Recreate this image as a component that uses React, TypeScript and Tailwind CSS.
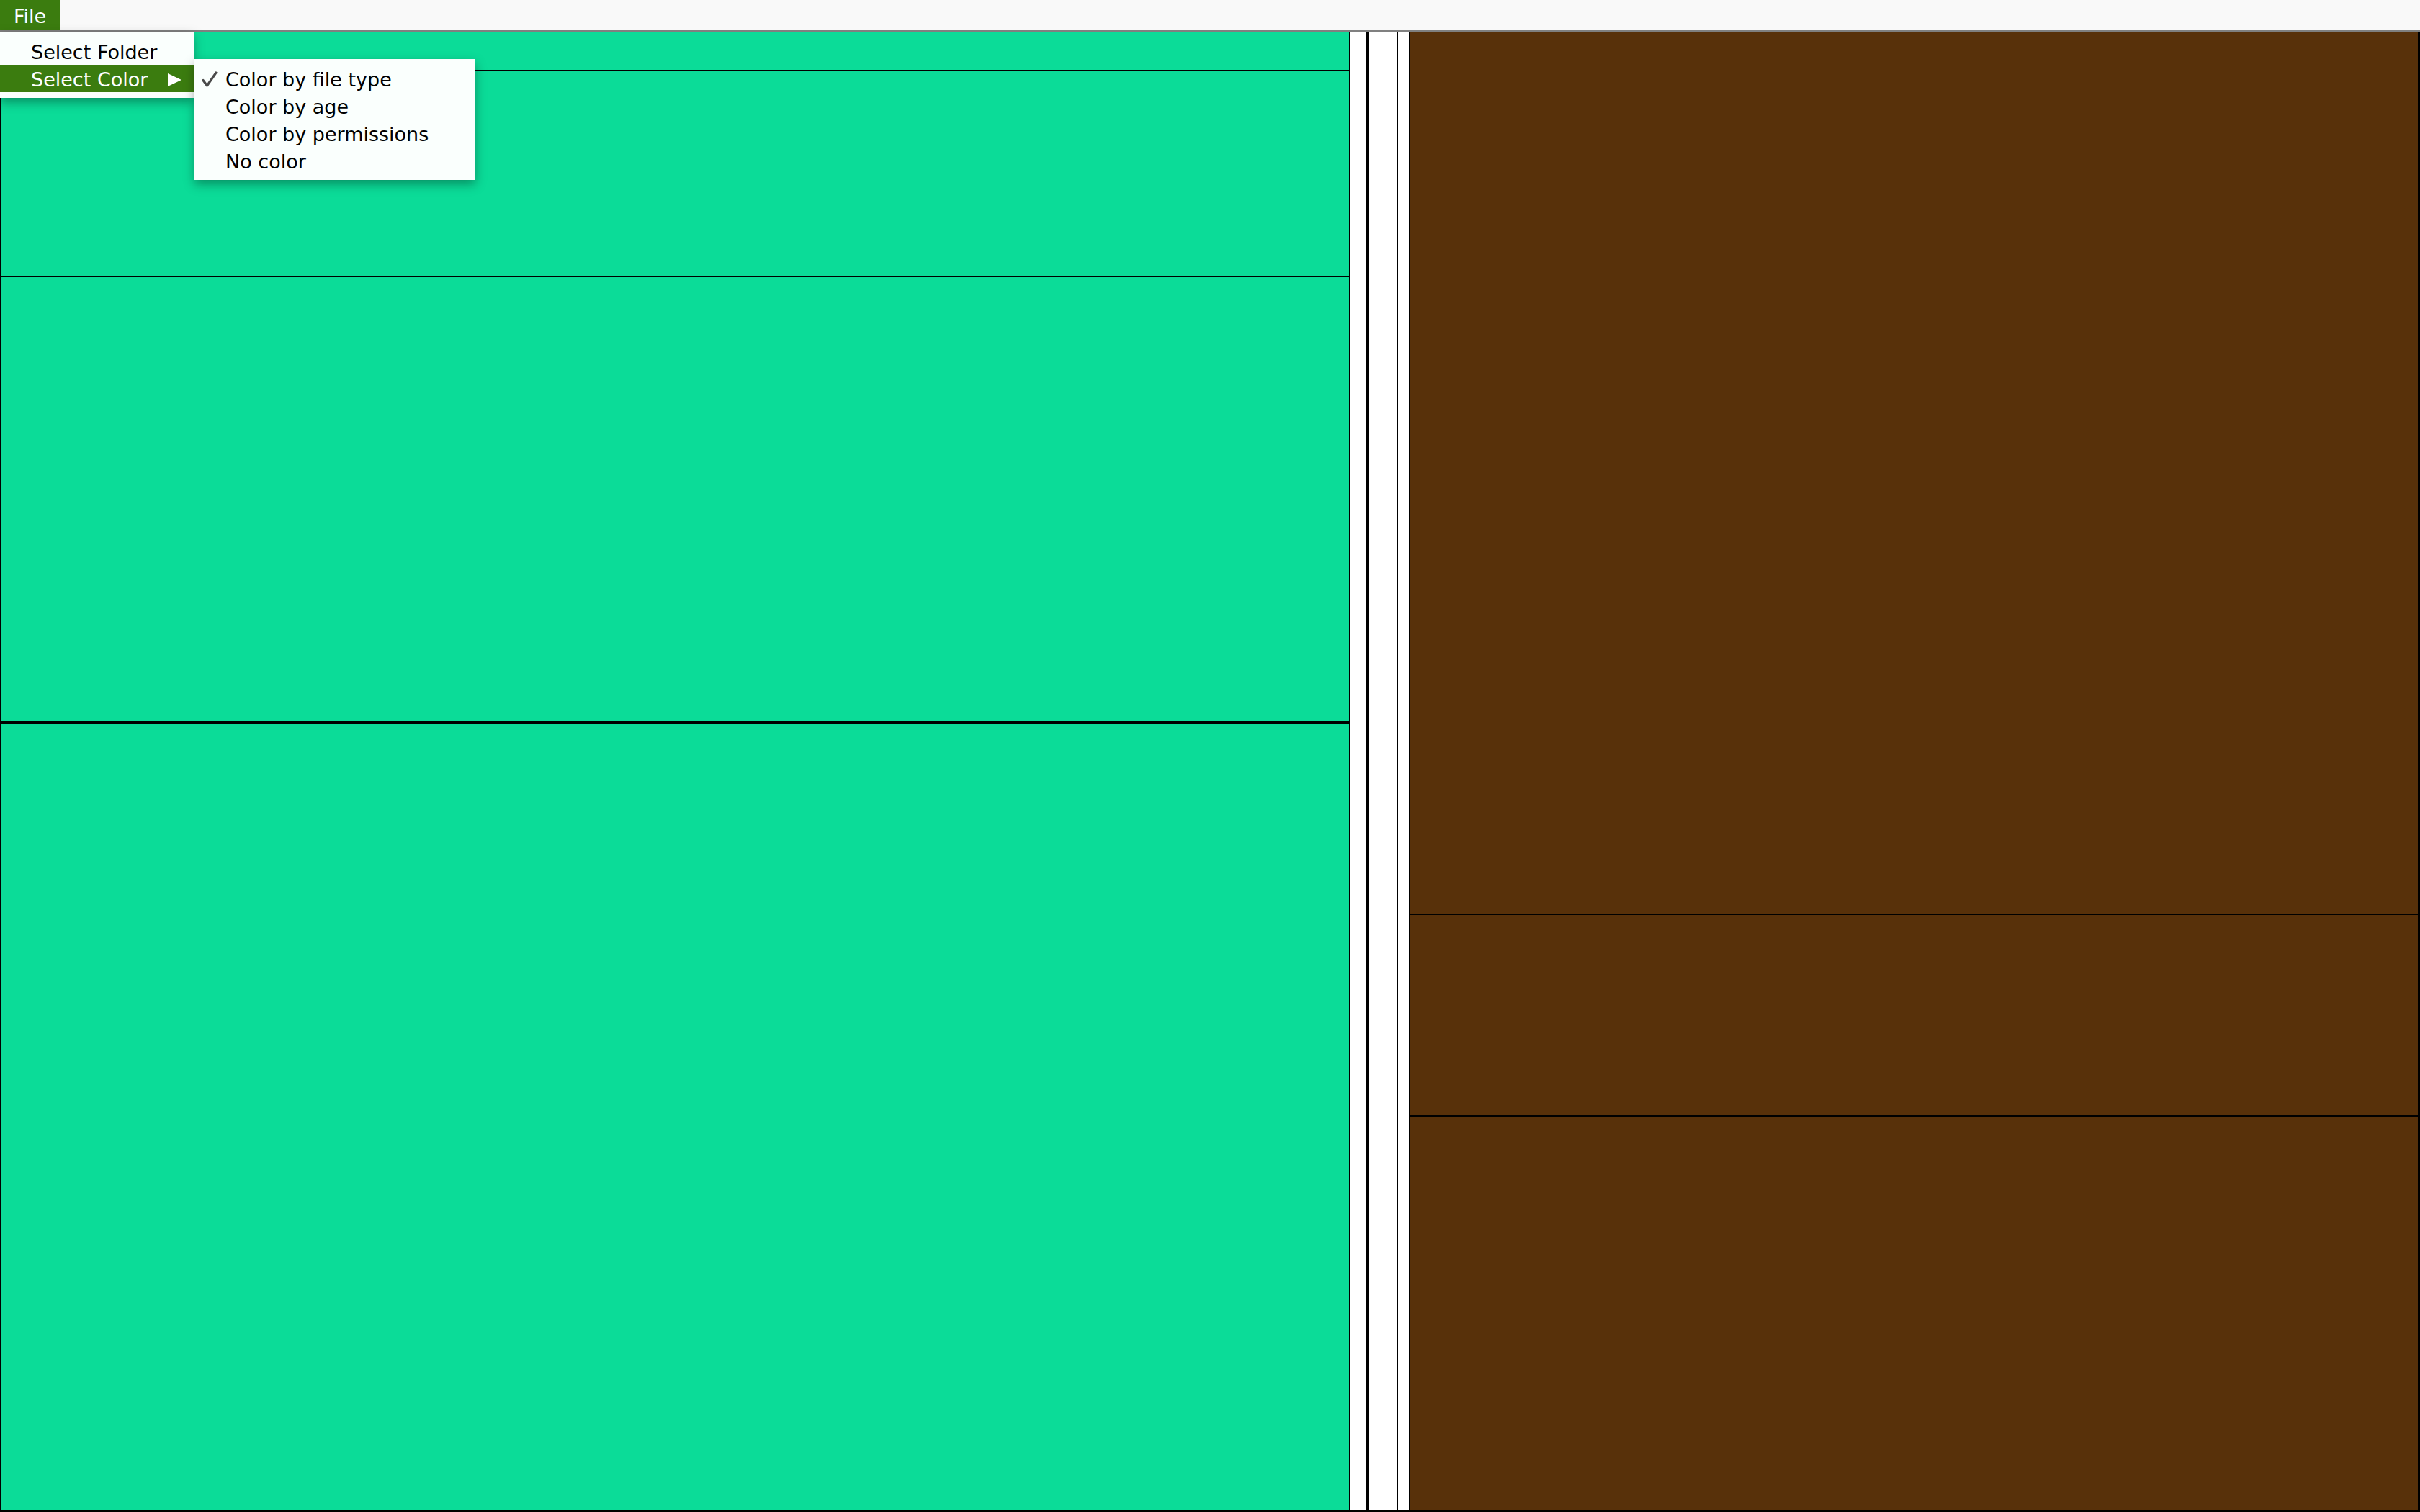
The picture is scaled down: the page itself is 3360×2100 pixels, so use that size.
const font = { fontFamily: '"DejaVu Sans", Verdana, sans-serif' };

const colorItems = [
  { label: "Color by file type", checked: true },
  { label: "Color by age", checked: false },
  { label: "Color by permissions", checked: false },
  { label: "No color", checked: false },
];

function Check() {
  return (
    <svg width="22" height="22" viewBox="0 0 22 22" className="absolute left-[10px] top-[9px]">
      <path d="M2 12.5 L7.5 20 L20 2" fill="none" stroke="#4a4a4a" strokeWidth="3.2" strokeLinecap="round" strokeLinejoin="round" />
    </svg>
  );
}

function Menus() {
  return (
    <>
      {/* File dropdown */}
      <div className="absolute left-0 top-[44px] z-10 w-[269px] bg-[#fafffd] py-[8px] text-[27px] shadow-[0_6px_14px_rgba(0,0,0,0.35)]">
        <div className="h-[38px] overflow-hidden pl-[43px] leading-[42px] text-black">Select Folder</div>
        <div className="relative h-[38px] bg-[#3b7c0f] pl-[43px] leading-[42px] text-white">
          Select Color
          <svg width="20" height="18" viewBox="0 0 20 18" className="absolute left-[233px] top-[12px]">
            <path d="M0 0 L19 9 L0 18 Z" fill="white" />
          </svg>
        </div>
      </div>

      {/* Select Color submenu */}
      <div className="absolute left-[270px] top-[82px] z-20 w-[390px] bg-[#fafffd] py-[8px] text-[27px] text-black shadow-[0_6px_14px_rgba(0,0,0,0.35)]">
        {colorItems.map((item) => (
          <div key={item.label} className="relative h-[38px] pl-[43px] leading-[42px]">
            {item.checked && <Check />}
            {item.label}
          </div>
        ))}
      </div>
    </>
  );
}

export default function App() {
  return (
    <div className="relative h-[2100px] w-[3360px] overflow-hidden bg-white" style={font}>
      {/* Menu bar */}
      <div className="flex h-[44px] border-b-2 border-[#808080] bg-[#f9f9f9]">
        <div className="h-[42px] w-[83px] overflow-hidden bg-[#3b7c0f] pl-[19px] text-[27px] leading-[46px] text-white">File</div>
      </div>

      {/* Treemap */}
      <div className="flex h-[2056px]">
        <div className="flex w-[1875px] flex-col border-l border-r-2 border-black bg-[#0bdc98]">
          <div className="h-[55px] border-b-2 border-black" />
          <div className="h-[286px] border-b-2 border-black" />
          <div className="h-[620px] border-b-4 border-black" />
          <div className="flex-1 border-b-[3px] border-black" />
        </div>
        <div className="w-[22px] border-b-[3px] border-black bg-white" />
        <div className="w-[4px] bg-black" />
        <div className="w-[38px] border-b-[3px] border-black bg-white" />
        <div className="w-[2px] bg-black" />
        <div className="w-[15px] border-b-[3px] border-black bg-white" />
        <div className="w-[2px] bg-black" />
        <div className="flex flex-1 flex-col border-r-[3px] border-black bg-[#58310a]">
          <div className="h-[1227px] border-b-2 border-black" />
          <div className="h-[280px] border-b-2 border-black" />
          <div className="flex-1 border-b-[3px] border-black" />
        </div>
      </div>

      <Menus />
    </div>
  );
}
